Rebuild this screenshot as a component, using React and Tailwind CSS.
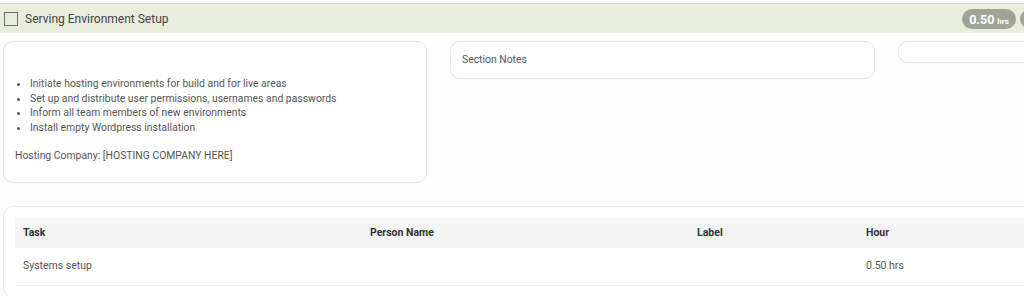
import React from "react";

const tasks = [{ task: "Systems setup", person: "", label: "", hours: "0.50 hrs" }];

const steps = [
  "Initiate hosting environments for build and for live areas",
  "Set up and distribute user permissions, usernames and passwords",
  "Inform all team members of new environments",
  "Install empty Wordpress installation",
];

export default function App() {
  return (
    <div className="w-[1024px] h-[296px] overflow-hidden bg-[#fdfdfd] font-['Roboto',sans-serif] text-[#555]">
      <div className="w-[1080px] pt-[3px]">
        {/* Section header bar */}
        <div className="h-[30px] flex items-center bg-[#e9edde] border-t border-[#d3d6cc]">
          <span className="ml-[4px] w-[14px] h-[14px] border border-[#6f6f6f] shrink-0" />
          <span className="ml-[7px] text-[12px] text-[#444]">Serving Environment Setup</span>
          <span className="ml-auto flex items-baseline justify-center w-[54px] h-[20px] pt-[2px] bg-[#9fa496] text-white font-bold rounded-full">
            <span className="text-[12.5px]">0.50</span>
            <span className="text-[8px] ml-[3px]">hrs</span>
          </span>
          <span className="ml-[4px] w-[20px] h-[20px] rounded-full bg-[#9fa496] mr-[40px]" />
        </div>

        {/* Notes cards */}
        <div className="flex items-start gap-[23px] pl-[3px] pt-[8px]">
          <div className="shrink-0 w-[424px] h-[142px] border border-[#e6e6e6] rounded-[10px] bg-white text-[10.4px] leading-[14.5px] pt-[35px] px-[11px]">
            <ul className="list-disc pl-[15px]">
              {steps.map((s) => (
                <li key={s}>{s}</li>
              ))}
            </ul>
            <p className="mt-[14px]">Hosting Company: [HOSTING COMPANY HERE]</p>
          </div>
          <div className="shrink-0 w-[425px] h-[38px] border border-[#e6e6e6] rounded-[10px] bg-white flex items-center px-[11px] text-[10.4px]">
            Section Notes
          </div>
          <div className="shrink-0 w-[200px] h-[22px] border border-[#e6e6e6] rounded-[10px] bg-white" />
        </div>

        {/* Task table card */}
        <div className="ml-[3px] mt-[23px] w-[1060px] border border-[#ececec] rounded-[10px] bg-white p-[11px]">
          <table className="w-full text-[10.5px] border-collapse">
            <thead>
              <tr className="bg-[#f5f5f5] h-[30px] text-left text-[#333] font-bold">
                <th className="w-[347px] pl-[8px]">Task</th>
                <th className="w-[327px] pl-[8px]">Person Name</th>
                <th className="w-[169px] pl-[8px]">Label</th>
                <th className="pl-[8px]">Hour</th>
              </tr>
            </thead>
            <tbody>
              {tasks.map((t) => (
                <tr key={t.task} className="h-[37px] border-b border-[#ececec]">
                  <td className="pl-[8px]">{t.task}</td>
                  <td className="pl-[8px]">{t.person}</td>
                  <td className="pl-[8px]">{t.label}</td>
                  <td className="pl-[8px]">{t.hours}</td>
                </tr>
              ))}
            </tbody>
          </table>
        </div>
      </div>
    </div>
  );
}
